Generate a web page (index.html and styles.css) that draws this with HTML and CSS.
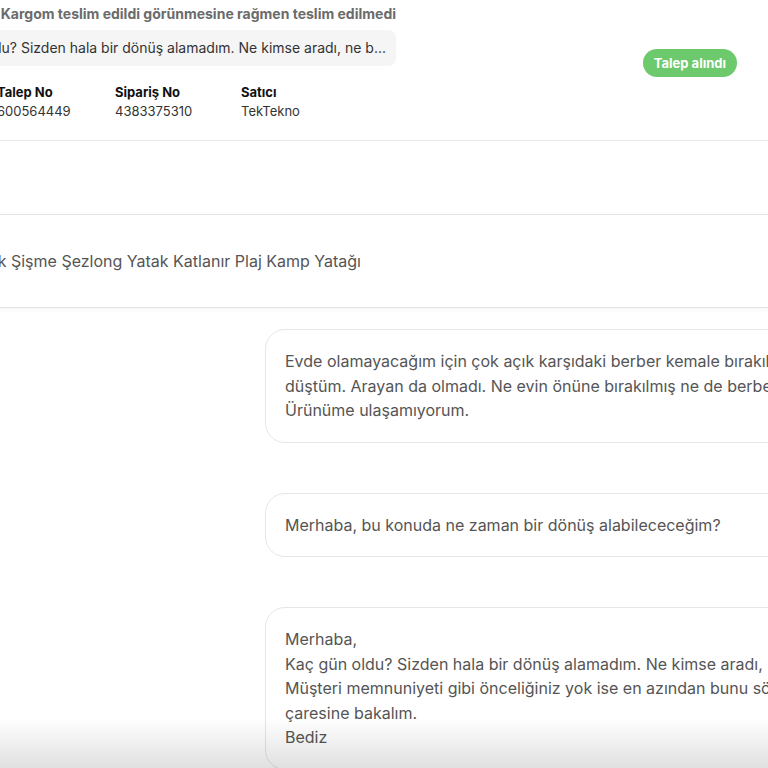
FILE: index.html
```html
<!DOCTYPE html>
<html lang="tr">

<head>
    <meta charset="UTF-8">
    <meta name="viewport" content="width=device-width, initial-scale=1.0">
    <title>Talep Detayı</title>
    <link rel="stylesheet" href="styles.css">
</head>

<body>
    <div class="page">
        <div class="ticketHeader">
            <div class="summary">
                <div class="summaryTop">
                    <h3 class="ticketTitle">Teslimat Sorunu - Kargom teslim edildi görünmesine rağmen teslim edilmedi</h3>
                    <p class="preview">Kaç gün oldu? Sizden hala bir dönüş alamadım. Ne kimse aradı, ne b...</p>
                </div>
                <div class="infoRow">
                    <div class="info">
                        <span class="label">Talep No</span>
                        <span class="value">600564449</span>
                    </div>
                    <div class="info">
                        <span class="label">Sipariş No</span>
                        <span class="value">4383375310</span>
                    </div>
                    <div class="info">
                        <span class="label">Satıcı</span>
                        <span class="value">TekTekno</span>
                    </div>
                </div>
            </div>
            <span class="status">Talep alındı</span>
        </div>

        <div class="emptyRow"></div>

        <div class="productRow">
            <p class="productName">Yastık Şişme Şezlong Yatak Katlanır Plaj Kamp Yatağı</p>
        </div>

        <div class="messages">
            <div class="bubble">
                <p>Evde olamayacağım için çok açık karşıdaki berber kemale bırakılmasını istedim. Teslim edildi bildirimi ile şoka<br>düştüm. Arayan da olmadı. Ne evin önüne bırakılmış ne de berbere bırakılmış.<br>Ürünüme ulaşamıyorum.</p>
            </div>
            <div class="bubble">
                <p>Merhaba, bu konuda ne zaman bir dönüş alabilececeğim?</p>
            </div>
            <div class="bubble">
                <p>Merhaba,<br>Kaç gün oldu? Sizden hala bir dönüş alamadım. Ne kimse aradı, ne bir bilgi verildi.<br>Müşteri memnuniyeti gibi önceliğiniz yok ise en azından bunu söyleyin de başımızın<br>çaresine bakalım.<br>Bediz</p>
            </div>
        </div>
    </div>
    <div class="fade"></div>
</body>

</html>
```

FILE: styles.css
```css
* {
    margin: 0;
    padding: 0;
    box-sizing: border-box;
}

body {
    background: #fff;
    font-family: Inter, "Noto Sans", sans-serif;
    overflow: hidden;
    height: 768px;
}

.page {
    width: 1000px;
    margin-left: -3px;
}

/* Ticket header */
.ticketHeader {
    display: flex;
    align-items: flex-start;
    padding: 4px 0 20px;
    border-bottom: 1px solid #e8e8e8;
    width: 771px;
}

.summary {
    flex: 1;
}

.summaryTop {
    width: 399px;
    display: flex;
    flex-direction: column;
    align-items: flex-end;
}

.ticketTitle {
    font-size: 14px;
    font-weight: 700;
    line-height: 20px;
    color: #6b6b6b;
    white-space: nowrap;
}

.preview {
    margin-top: 6px;
    height: 36px;
    line-height: 36px;
    padding: 0 10px;
    font-size: 14px;
    color: #333;
    background: #f5f5f5;
    border-radius: 8px;
    white-space: nowrap;
}

.infoRow {
    display: grid;
    grid-template-columns: 118px 126px auto;
    margin-top: 16px;
}

.info {
    display: flex;
    flex-direction: column;
}

.label {
    font-size: 13px;
    font-weight: 700;
    line-height: 20px;
    color: #111;
}

.value {
    font-size: 13px;
    line-height: 18px;
    color: #333;
}

.status {
    margin-top: 45px;
    margin-right: 31px;
    height: 28px;
    line-height: 28px;
    padding: 0 11px;
    border-radius: 14px;
    background: #6cc96c;
    color: #fff;
    font-size: 13px;
    font-weight: 700;
}

.emptyRow {
    height: 74px;
    border-bottom: 1px solid #e5e5e5;
    width: 771px;
}

.productRow {
    height: 93px;
    display: flex;
    align-items: center;
    border-bottom: 1px solid #e3e3e3;
    box-shadow: 0 2px 4px rgba(0, 0, 0, 0.04);
    width: 771px;
}

.productName {
    width: 364px;
    display: flex;
    justify-content: flex-end;
    white-space: nowrap;
    font-size: 16px;
    color: #555;
}

/* Messages */
.messages {
    display: flex;
    flex-direction: column;
    gap: 50px;
    padding: 21px 0 0 268px;
}

.bubble {
    width: 700px;
    border: 1px solid #e6e6e6;
    border-radius: 20px;
    padding: 19px 19px;
    background: #fff;
}

.bubble p {
    font-size: 16px;
    line-height: 24.5px;
    color: #555;
    white-space: nowrap;
}

.fade {
    position: fixed;
    left: 0;
    right: 0;
    bottom: 0;
    height: 50px;
    background: linear-gradient(to bottom, rgba(0, 0, 0, 0), rgba(0, 0, 0, 0.12));
    pointer-events: none;
}
```
